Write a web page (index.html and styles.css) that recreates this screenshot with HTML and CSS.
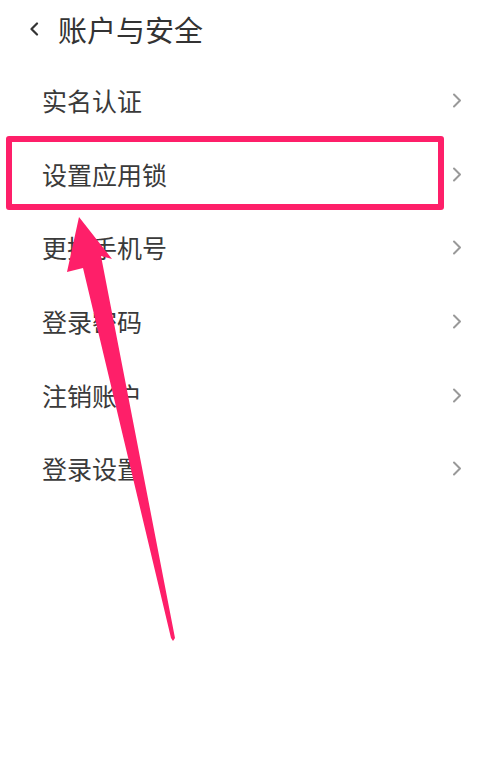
FILE: index.html
```html
<!DOCTYPE html>
<html lang="zh-CN">
<head>
<meta charset="utf-8">
<title>账户与安全</title>
<link rel="stylesheet" href="styles.css">
</head>
<body>
<div class="page">
  <header class="header">
    <svg class="back" width="10" height="14" viewBox="0 0 10 14"><path d="M8 1.5 L2.5 7 L8 12.5" fill="none" stroke="#333" stroke-width="2.2" stroke-linecap="round" stroke-linejoin="round"/></svg>
    <h1 class="title">账户与安全</h1>
  </header>
  <ul class="list">
    <li class="item"><span class="label">实名认证</span><svg class="chev" width="10" height="15" viewBox="0 0 10 15"><path d="M2 1.5 L8 7.5 L2 13.5" fill="none" stroke="#999" stroke-width="2" stroke-linecap="round" stroke-linejoin="round"/></svg></li>
    <li class="item"><span class="label">设置应用锁</span><svg class="chev" width="10" height="15" viewBox="0 0 10 15"><path d="M2 1.5 L8 7.5 L2 13.5" fill="none" stroke="#999" stroke-width="2" stroke-linecap="round" stroke-linejoin="round"/></svg></li>
    <li class="item"><span class="label">更换手机号</span><svg class="chev" width="10" height="15" viewBox="0 0 10 15"><path d="M2 1.5 L8 7.5 L2 13.5" fill="none" stroke="#999" stroke-width="2" stroke-linecap="round" stroke-linejoin="round"/></svg></li>
    <li class="item"><span class="label">登录密码</span><svg class="chev" width="10" height="15" viewBox="0 0 10 15"><path d="M2 1.5 L8 7.5 L2 13.5" fill="none" stroke="#999" stroke-width="2" stroke-linecap="round" stroke-linejoin="round"/></svg></li>
    <li class="item"><span class="label">注销账户</span><svg class="chev" width="10" height="15" viewBox="0 0 10 15"><path d="M2 1.5 L8 7.5 L2 13.5" fill="none" stroke="#999" stroke-width="2" stroke-linecap="round" stroke-linejoin="round"/></svg></li>
    <li class="item"><span class="label">登录设置</span><svg class="chev" width="10" height="15" viewBox="0 0 10 15"><path d="M2 1.5 L8 7.5 L2 13.5" fill="none" stroke="#999" stroke-width="2" stroke-linecap="round" stroke-linejoin="round"/></svg></li>
  </ul>
  <div class="highlight"></div>
  <svg class="arrow" width="500" height="772" viewBox="0 0 500 772"><path d="M79 217 L112 259 L101 256 L175 638 L173 641 L171 638 L83 268 L67 272 Z" fill="#fe1f69"/></svg>
</div>
</body>
</html>
```

FILE: styles.css
```css
* { box-sizing: border-box; }
html, body {
  margin: 0;
  padding: 0;
  background: #fff;
}
body {
  font-family: "Noto Sans CJK SC", "Noto Sans", sans-serif;
  color: #333;
}
.page {
  position: relative;
  width: 500px;
  height: 772px;
  overflow: hidden;
  background: #fff;
}
.header {
  height: 64px;
  display: flex;
  align-items: center;
  padding: 0 0 6px 29px;
}
.back {
  display: block;
  flex: none;
}
.title {
  margin: 0 0 0 19px;
  font-size: 29px;
  font-weight: 400;
  line-height: 1;
  color: #333;
}
.list {
  list-style: none;
  margin: 0;
  padding: 0;
}
.item {
  height: 73.6px;
  display: flex;
  align-items: center;
  justify-content: space-between;
  padding: 0 38px 0 42px;
}
.label {
  font-size: 25px;
  line-height: 1;
  color: #3a3a3a;
}
.chev {
  display: block;
  flex: none;
}
.highlight {
  position: absolute;
  left: 6px;
  top: 136px;
  width: 438px;
  height: 74px;
  border: 6px solid #fe1f69;
  border-radius: 3px;
}
.arrow {
  position: absolute;
  left: 0;
  top: 0;
}
```
